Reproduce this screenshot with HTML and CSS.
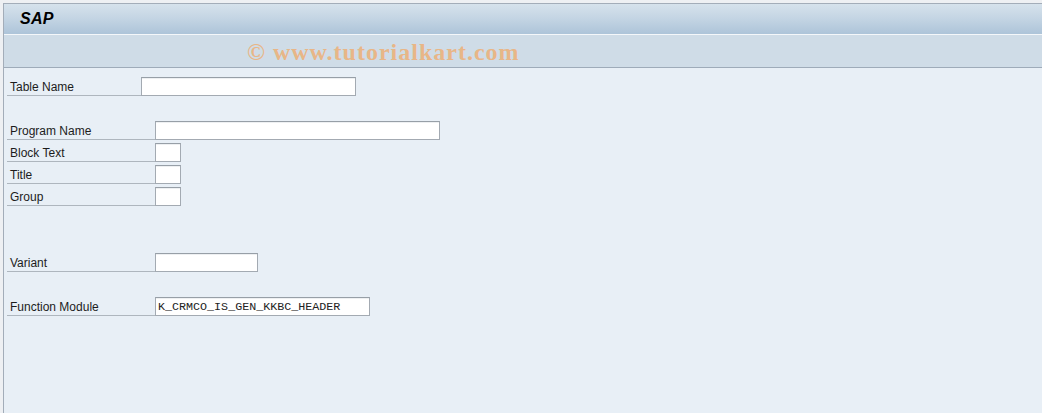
FILE: index.html
```html
<!DOCTYPE html>
<html>
<head>
<meta charset="utf-8">
<link rel="stylesheet" href="styles.css">
</head>
<body>
<div class="window">
  <div class="titlebar"><span class="title">SAP</span></div>
  <div class="toolbar"><span class="watermark">© www.tutorialkart.com</span></div>
  <div class="content">
    <div class="form">
      <div class="row"><span class="label label-short">Table Name</span><span class="field w-table"></span></div>
      <div class="row"></div>
      <div class="row"><span class="label">Program Name</span><span class="field w-program"></span></div>
      <div class="row"><span class="label">Block Text</span><span class="field w-small"></span></div>
      <div class="row"><span class="label">Title</span><span class="field w-small"></span></div>
      <div class="row"><span class="label">Group</span><span class="field w-small"></span></div>
      <div class="row"></div>
      <div class="row"></div>
      <div class="row"><span class="label">Variant</span><span class="field w-variant"></span></div>
      <div class="row"></div>
      <div class="row"><span class="label">Function Module</span><span class="field w-func mono">K_CRMCO_IS_GEN_KKBC_HEADER</span></div>
    </div>
  </div>
</div>
</body>
</html>
```

FILE: styles.css
```css
html, body {
  margin: 0;
  padding: 0;
  height: 100%;
}
body {
  background: #eef0f3;
  font-family: "Liberation Sans", Arial, sans-serif;
  overflow: hidden;
}
.window {
  margin: 3px 0 0 3px;
  border-top: 1px solid #a3adb9;
  border-left: 1px solid #a3adb9;
  height: calc(100% - 4px);
  display: flex;
  flex-direction: column;
}
.titlebar {
  height: 30px;
  background: linear-gradient(to bottom, #d6e2ec 0%, #c3d4e3 50%, #adc4d9 100%);
  border-bottom: 1px solid #f4f7fa;
  display: flex;
  align-items: center;
  padding-left: 16px;
}
.title {
  font-family: "Liberation Sans", Arial, sans-serif;
  font-weight: bold;
  font-style: italic;
  font-size: 16px;
  color: #000;
  letter-spacing: 0.3px;
}
.toolbar {
  height: 32px;
  background: #cfdce7;
  border-bottom: 1px solid #9eabb9;
  display: flex;
  align-items: center;
  padding-left: 243px;
}
.watermark {
  font-family: "Liberation Serif", "Times New Roman", serif;
  font-weight: bold;
  font-size: 24px;
  letter-spacing: 1px;
  color: #e8b687;
  position: relative;
  top: 1px;
}
.content {
  flex: 1;
  background: #e8eff6;
  padding: 9px 0 0 3px;
}
.form {
  display: flex;
  flex-direction: column;
  gap: 3px;
}
.row {
  height: 19px;
  display: flex;
}
.label {
  box-sizing: border-box;
  width: 148px;
  height: 19px;
  border-bottom: 1px solid #aeb6be;
  padding: 2px 0 0 3px;
  font-size: 12px;
  line-height: 17px;
  color: #1c1c1c;
}
.label-short {
  width: 134px;
}
.field {
  box-sizing: border-box;
  height: 19px;
  background: #fff;
  border: 1px solid #a3aab2;
  border-top-color: #979fa7;
  box-shadow: inset 0 1px 0 #eef0f2;
}
.w-table { width: 215px; }
.w-program { width: 285px; }
.w-small { width: 26px; }
.w-variant { width: 103px; }
.w-func { width: 215px; }
.mono {
  font-family: "Liberation Mono", "Courier New", monospace;
  font-size: 11.7px;
  line-height: 18px;
  padding-left: 2px;
  color: #222;
}
```
